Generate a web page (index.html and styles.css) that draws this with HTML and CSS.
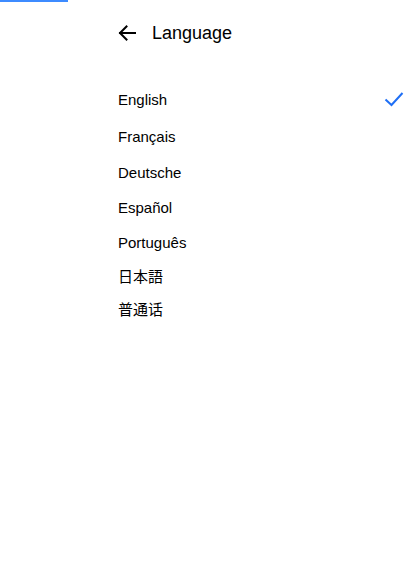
FILE: index.html
```html
<!DOCTYPE html>
<html>
<head>
<meta charset="utf-8">
<link rel="stylesheet" href="styles.css">
</head>
<body>
<div class="progress"></div>
<header class="header">
  <svg class="back" width="18" height="16" viewBox="0 0 18 16"><path d="M17 8H2M8.5 1.5L2 8l6.5 6.5" fill="none" stroke="#000" stroke-width="2" stroke-linecap="square"/></svg>
  <h1 class="title">Language</h1>
</header>
<ul class="list">
  <li class="item first">English<svg class="check" width="20" height="16" viewBox="0 0 20 16"><path d="M1.5 8.5l6 5.5L18.5 2" fill="none" stroke="#1f6ff5" stroke-width="2"/></svg></li>
  <li class="item second">Français</li>
  <li class="item">Deutsche</li>
  <li class="item">Español</li>
  <li class="item">Português</li>
  <li class="item cjk">日本語</li>
  <li class="item cjk">普通话</li>
</ul>
</body>
</html>
```
FILE: styles.css
```css
html, body {
  margin: 0;
  padding: 0;
  background: #fff;
  font-family: "Liberation Sans", "Noto Sans CJK JP", sans-serif;
  color: #000;
}
.progress {
  width: 68px;
  height: 2px;
  background: #3d8bff;
}
.header {
  display: flex;
  align-items: center;
  height: 62px;
  padding-left: 118px;
}
.back {
  display: block;
}
.title {
  margin: 0 0 0 16px;
  font-size: 18px;
  font-weight: 400;
  line-height: 62px;
}
.list {
  list-style: none;
  margin: 16px 0 0;
  padding: 0 13px 0 118px;
}
.item {
  display: flex;
  align-items: center;
  justify-content: space-between;
  height: 35px;
  font-size: 15px;
}
.item.first {
  height: 38px;
}
.item.second {
  height: 37px;
}
.item.cjk {
  height: 33px;
  padding-bottom: 2px;
  box-sizing: border-box;
}
.check {
  display: block;
}
```
